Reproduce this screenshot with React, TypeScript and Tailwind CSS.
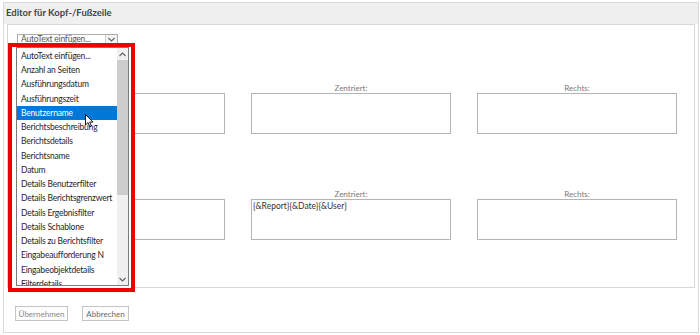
import React from 'react';

const items = [
  'AutoText einfügen...',
  'Anzahl an Seiten',
  'Ausführungsdatum',
  'Ausführungszeit',
  'Benutzername',
  'Berichtsbeschreibung',
  'Berichtsdetails',
  'Berichtsname',
  'Datum',
  'Details Benutzerfilter',
  'Details Berichtsgrenzwert',
  'Details Ergebnisfilter',
  'Details Schablone',
  'Details zu Berichtsfilter',
  'Eingabeaufforderung N',
  'Eingabeobjektdetails',
  'Filterdetails',
];

const Chevron: React.FC<{ up?: boolean }> = ({ up }) => (
  <svg width="7" height="5" viewBox="0 0 7 5" className="block">
    <path
      d={up ? 'M0.5 4 L3.5 1 L6.5 4' : 'M0.5 1 L3.5 4 L6.5 1'}
      fill="none"
      stroke="#606060"
      strokeWidth="1.1"
    />
  </svg>
);

const Row: React.FC<{ text?: string; className?: string }> = ({ text, className }) => (
  <div className={`grid grid-cols-[200px_200px_200px] gap-x-[26px] ml-[8px] ${className ?? ''}`}>
    {['Links:', 'Zentriert:', 'Rechts:'].map((label, i) => (
      <div key={label}>
        <div className="h-[10px] text-center text-[8px] leading-[10px] text-[#7a7a7a]">{label}</div>
        <div className="h-[41px] border border-[#b4b4b4] bg-white px-[1px] text-[8.5px] leading-[12px] text-[#333]">
          {i === 1 && text}
        </div>
      </div>
    ))}
  </div>
);

const App: React.FC = () => {
  return (
    <div
      className="relative w-[700px] h-[335px] bg-white overflow-hidden pt-[2px] pl-[3px] pr-[1px]"
      style={{ fontFamily: 'Lato, "Noto Sans", sans-serif' }}
    >
      {/* Dialog frame */}
      <div className="h-[331px] border border-[#d9d9d9] flex flex-col">
        <div className="h-[21px] bg-[#f0f0f0] flex items-center pl-[2px] text-[9.5px] font-bold text-[#444]">
          Editor für Kopf-/Fußzeile
        </div>

        {/* Editor panel */}
        <div className="ml-[3px] mr-[3px] h-[264px] border border-[#d6d6d6] bg-white pt-[9px] pl-[9px]">
          <div className="flex w-[101px] h-[11px] border border-[#acacac] bg-white">
            <div className="flex-1 pl-[3px] text-[8.5px] leading-[9px] tracking-[-0.2px] text-[#555] whitespace-nowrap overflow-hidden">
              AutoText einfügen...
            </div>
            <div className="w-[12px] border-l border-[#d0d0d0] bg-[#f4f4f4] flex items-center justify-center">
              <Chevron />
            </div>
          </div>

          <Row className="mt-[38px]" />
          <Row className="mt-[55px]" text="{&Report}{&Date}{&User}" />
        </div>

        {/* Buttons */}
        <div className="flex gap-[14px] mt-[18px] ml-[11px]">
          <button className="w-[53px] h-[15px] border border-[#c4c4c4] bg-[#fdfdfd] text-[8px] text-[#8a8a8a]">
            Übernehmen
          </button>
          <button className="w-[47px] h-[15px] border border-[#c4c4c4] bg-[#fdfdfd] text-[8px] text-[#6a6a6a]">
            Abbrechen
          </button>
        </div>
      </div>

      {/* Red annotation frame */}
      <div className="absolute left-[8px] top-[43px] w-[127px] h-[249px] border-4 border-[#f00000] bg-white" />

      {/* Open dropdown list */}
      <div className="absolute left-[16px] top-[47px] w-[113px] h-[239px] border border-[#7a7a7a] bg-white flex overflow-hidden">
        <div className="flex-1 pt-[1px] overflow-hidden">
          {items.map((item, i) => (
            <div
              key={item}
              className={`h-[14.25px] pl-[4px] flex items-center text-[8.5px] tracking-[-0.2px] whitespace-nowrap ${
                i === 4 ? 'bg-[#0078d7] text-white' : 'text-[#1e1e2a]'
              }`}
            >
              {item}
            </div>
          ))}
        </div>
        <div className="w-[11px] bg-[#f0f0f0] flex flex-col">
          <div className="h-[12px] flex items-center justify-center">
            <Chevron up />
          </div>
          <div className="h-[135px] bg-[#cdcdcd]" />
          <div className="flex-1" />
          <div className="h-[12px] flex items-center justify-center">
            <Chevron />
          </div>
        </div>
      </div>

      {/* Mouse cursor */}
      <svg className="absolute left-[85px] top-[114px]" width="9" height="14" viewBox="0 0 9 14">
        <path d="M0.5 0.5 L0.5 11 L3 8.6 L4.8 12.8 L6.4 12.1 L4.7 8.1 L8 8.1 Z" fill="#fff" stroke="#000" strokeWidth="0.9" />
      </svg>
    </div>
  );
};

export default App;
